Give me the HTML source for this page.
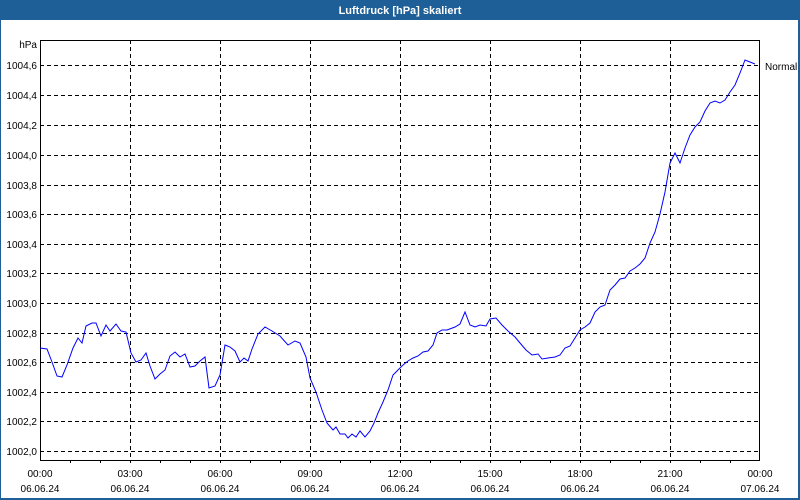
<!DOCTYPE html>
<html><head><meta charset="utf-8"><style>
html,body{margin:0;padding:0;background:#fff}
svg{display:block}
text{font-family:"Liberation Sans",sans-serif;font-size:10px;fill:#000}
</style></head><body>
<svg width="800" height="500" viewBox="0 0 800 500" xmlns="http://www.w3.org/2000/svg">
<rect x="0" y="0" width="800" height="500" fill="#1d5f96"/>
<rect x="1" y="20" width="797" height="478" fill="#fff"/>
<text x="400" y="14" text-anchor="middle" style="fill:#fff;font-weight:bold;font-size:11px">Luftdruck [hPa] skaliert</text>
<g stroke="#000" stroke-width="1" stroke-dasharray="4,3" shape-rendering="crispEdges">
<line x1="130.5" y1="40" x2="130.5" y2="460"/><line x1="220.5" y1="40" x2="220.5" y2="460"/><line x1="310.5" y1="40" x2="310.5" y2="460"/><line x1="400.5" y1="40" x2="400.5" y2="460"/><line x1="490.5" y1="40" x2="490.5" y2="460"/><line x1="580.5" y1="40" x2="580.5" y2="460"/><line x1="670.5" y1="40" x2="670.5" y2="460"/>
<line x1="40" y1="65.5" x2="760" y2="65.5"/><line x1="40" y1="95.5" x2="760" y2="95.5"/><line x1="40" y1="125.5" x2="760" y2="125.5"/><line x1="40" y1="155.5" x2="760" y2="155.5"/><line x1="40" y1="185.5" x2="760" y2="185.5"/><line x1="40" y1="214.5" x2="760" y2="214.5"/><line x1="40" y1="244.5" x2="760" y2="244.5"/><line x1="40" y1="273.5" x2="760" y2="273.5"/><line x1="40" y1="303.5" x2="760" y2="303.5"/><line x1="40" y1="333.5" x2="760" y2="333.5"/><line x1="40" y1="362.5" x2="760" y2="362.5"/><line x1="40" y1="392.5" x2="760" y2="392.5"/><line x1="40" y1="421.5" x2="760" y2="421.5"/><line x1="40" y1="451.5" x2="760" y2="451.5"/>
</g>
<g stroke="#000" stroke-width="1" fill="none" shape-rendering="crispEdges">
<rect x="40.5" y="40.5" width="719" height="420"/>
<path d="M70.5 460v3M100.5 460v3M130.5 460v3M160.5 460v3M190.5 460v3M220.5 460v3M250.5 460v3M280.5 460v3M310.5 460v3M340.5 460v3M370.5 460v3M400.5 460v3M430.5 460v3M460.5 460v3M490.5 460v3M520.5 460v3M550.5 460v3M580.5 460v3M610.5 460v3M640.5 460v3M670.5 460v3M700.5 460v3M730.5 460v3"/>
</g>
<polyline fill="none" stroke="#0000ff" stroke-width="1" points="40,348 47,349 52,362 57,376 62,377 67,365 73,348 78,338 82,343 86,326 92,323 96,323 101,336 106,325 110,331 116,324 121,331 126,332 131,353 136,362 141,360 146,353 150,366 155,379 160,374 165,370 170,356 175,352 180,357 185,354 190,367 195,366 200,361 205,357 209,388 215,386 220,375 225,345 230,347 235,351 240,362 244,358 248,361 252,349 258,334 265,327 272,331 280,336 288,345 295,341 300,343 306,357 310,378 316,392 322,410 327,423 333,430 336,427 340,434 345,434 348,438 352,434 356,437 360,431 365,437 370,431 374,423 378,413 383,402 388,390 393,375 398,370 403,365 408,361 413,358 418,356 423,352 428,351 433,345 437,333 442,330 447,330 455,327 460,324 465,312 470,325 475,327 480,325 486,326 490,319 496,318 502,325 508,331 515,337 520,343 526,350 532,355 538,354 542,359 548,358 555,357 560,355 565,348 570,346 575,338 580,330 585,327 590,323 595,312 600,307 605,305 610,290 615,285 620,279 625,278 630,271 635,268 640,264 645,258 650,243 655,232 660,214 665,192 670,163 675,153 680,163 685,148 690,135 695,127 700,122 705,111 710,103 715,101 720,103 725,100 730,92 735,85 740,73 745,60 750,62 755,64"/>
<g text-anchor="end">
<text x="37" y="48">hPa</text>
<text x="37" y="69">1004,6</text><text x="37" y="99">1004,4</text><text x="37" y="129">1004,2</text><text x="37" y="159">1004,0</text><text x="37" y="189">1003,8</text><text x="37" y="218">1003,6</text><text x="37" y="248">1003,4</text><text x="37" y="277">1003,2</text><text x="37" y="307">1003,0</text><text x="37" y="337">1002,8</text><text x="37" y="366">1002,6</text><text x="37" y="396">1002,4</text><text x="37" y="425">1002,2</text><text x="37" y="455">1002,0</text>
</g>
<text x="765" y="70">Normal</text>
<g text-anchor="middle">
<text x="40" y="477">00:00</text><text x="40" y="492">06.06.24</text>
<text x="130" y="477">03:00</text><text x="130" y="492">06.06.24</text>
<text x="220" y="477">06:00</text><text x="220" y="492">06.06.24</text>
<text x="310" y="477">09:00</text><text x="310" y="492">06.06.24</text>
<text x="400" y="477">12:00</text><text x="400" y="492">06.06.24</text>
<text x="490" y="477">15:00</text><text x="490" y="492">06.06.24</text>
<text x="580" y="477">18:00</text><text x="580" y="492">06.06.24</text>
<text x="670" y="477">21:00</text><text x="670" y="492">06.06.24</text>
<text x="760" y="477">00:00</text><text x="760" y="492">07.06.24</text>
</g>
</svg>
</body></html>
